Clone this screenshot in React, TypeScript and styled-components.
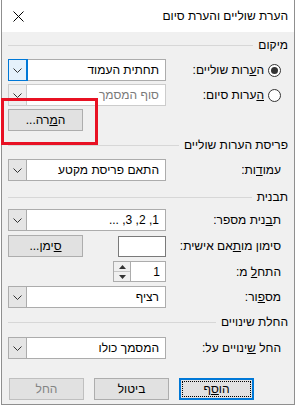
import React from 'react';
import styled, { createGlobalStyle } from 'styled-components';

const Global = createGlobalStyle`
  html, body { margin: 0; padding: 0; background: #ffffff; }
  body {
    font-family: "Liberation Sans", "DejaVu Sans", sans-serif;
    font-size: 12px;
    color: #000;
  }
  #root { width: 297px; height: 410px; overflow: hidden; }
`;

const Window = styled.div`
  position: relative;
  box-sizing: border-box;
  width: 294px;
  height: 405px;
  margin-left: 1px;
  border: 1px solid #8f8f8f;
  border-top: none;
  background: #f0f0f0;
  direction: rtl;
  display: flex;
  flex-direction: column;
`;

const TitleBar = styled.div`
  height: 32px;
  flex: none;
  background: #ffffff;
  display: flex;
  align-items: center;
  justify-content: space-between;
  padding: 0 6px 0 11px;
`;

const TitleText = styled.span`
  font-size: 12px;
  color: #000;
`;

const CloseIcon = styled.svg`
  width: 11px;
  height: 11px;
  display: block;
`;

const Content = styled.div`
  padding: 6px 6px 0 6px;
  display: flex;
  flex-direction: column;
`;

const Header = styled.div<{ $mt: number }>`
  display: flex;
  align-items: center;
  gap: 5px;
  height: 14px;
  margin-top: ${(p) => p.$mt}px;
  white-space: nowrap;
`;

const Rule = styled.div`
  flex: 1;
  height: 1px;
  background: #d7d7d7;
  margin-top: 1px;
`;

const Rows = styled.div<{ $mt: number; $gap: number }>`
  display: grid;
  grid-template-columns: 1fr 158px;
  row-gap: ${(p) => p.$gap}px;
  margin-top: ${(p) => p.$mt}px;
  align-items: center;
`;

const Label = styled.div<{ $pad?: number }>`
  display: flex;
  align-items: center;
  gap: 4px;
  padding-right: ${(p) => p.$pad ?? 7}px;
  white-space: nowrap;
`;

const Ctrl = styled.div<{ $justify?: string }>`
  display: flex;
  align-items: center;
  justify-content: ${(p) => p.$justify ?? 'space-between'};
`;

const RadioCircle = styled.span<{ $checked?: boolean }>`
  box-sizing: border-box;
  width: 13px;
  height: 13px;
  border-radius: 50%;
  border: 1px solid #333;
  background: #fff;
  display: flex;
  align-items: center;
  justify-content: center;
  &::after {
    content: '';
    width: 7px;
    height: 7px;
    border-radius: 50%;
    background: ${(p) => (p.$checked ? '#333' : 'transparent')};
  }
`;

const Select = styled.div<{ $disabled?: boolean }>`
  box-sizing: border-box;
  width: 158px;
  height: 22px;
  background: #fff;
  border: 1px solid ${(p) => (p.$disabled ? '#cccccc' : '#acacac')};
  color: ${(p) => (p.$disabled ? '#7a7a7a' : '#000')};
  display: flex;
  align-items: center;
  justify-content: space-between;
`;

const SelectText = styled.span`
  padding-right: 6px;
  white-space: nowrap;
`;

const ArrowBox = styled.span<{ $focus?: boolean; $disabled?: boolean }>`
  box-sizing: border-box;
  width: 18px;
  height: 20px;
  margin-left: 0;
  display: flex;
  align-items: center;
  justify-content: center;
  background: ${(p) => (p.$focus ? '#e5f1fb' : p.$disabled ? '#efefef' : '#e5e5e5')};
  border-right: 1px solid ${(p) => (p.$focus ? '#0078d7' : p.$disabled ? '#cccccc' : '#acacac')};
  ${(p) => (p.$focus ? 'outline: 1px solid #0078d7; outline-offset: 0;' : '')}
`;

const Chevron = styled.svg`
  width: 9px;
  height: 5px;
  display: block;
`;

const Button = styled.div<{ $disabled?: boolean; $default?: boolean }>`
  box-sizing: border-box;
  width: 75px;
  height: 22px;
  display: flex;
  align-items: center;
  justify-content: center;
  background: #e1e1e1;
  border: ${(p) => (p.$default ? '2px solid #0078d7' : `1px solid ${p.$disabled ? '#bfbfbf' : '#adadad'}`)};
  color: ${(p) => (p.$disabled ? '#838383' : '#000')};
  white-space: nowrap;
  position: relative;
`;

const FocusRing = styled.span`
  position: absolute;
  inset: 1px;
  border: 1px dotted #000;
  pointer-events: none;
`;

const TextBox = styled.div`
  box-sizing: border-box;
  width: 48px;
  height: 21px;
  background: #fff;
  border: 1px solid #7a7a7a;
`;

const Spinner = styled.div`
  box-sizing: border-box;
  width: 53px;
  height: 21px;
  background: #fff;
  border: 1px solid #acacac;
  display: flex;
  align-items: center;
  justify-content: space-between;
`;

const SpinValue = styled.span`
  padding-right: 5px;
`;

const SpinButtons = styled.span`
  box-sizing: border-box;
  width: 17px;
  height: 19px;
  border-right: 1px solid #acacac;
  display: flex;
  flex-direction: column;
  background: #f0f0f0;
`;

const SpinHalf = styled.span<{ $top?: boolean }>`
  flex: 1;
  display: flex;
  align-items: center;
  justify-content: center;
  ${(p) => (p.$top ? 'border-bottom: 1px solid #c6c6c6;' : '')}
`;

const Tri = styled.svg`
  width: 7px;
  height: 4px;
  display: block;
`;

const Footer = styled.div`
  display: flex;
  justify-content: flex-end;
  gap: 10px;
  margin-top: 19px;
  padding-left: 1px;
`;

const Highlight = styled.div`
  position: absolute;
  left: -1px;
  top: 98px;
  width: 97px;
  height: 47px;
  box-sizing: border-box;
  border: 3px solid #e81123;
  pointer-events: none;
`;

const ChevronIcon = () => (
  <Chevron viewBox="0 0 9 5">
    <polyline points="0.5,0.5 4.5,4.5 8.5,0.5" fill="none" stroke="#333" strokeWidth="1" />
  </Chevron>
);

const Dropdown: React.FC<{ text: string; focus?: boolean; disabled?: boolean }> = ({ text, focus, disabled }) => (
  <Select $disabled={disabled}>
    <SelectText>{text}</SelectText>
    <ArrowBox $focus={focus} $disabled={disabled}>
      <ChevronIcon />
    </ArrowBox>
  </Select>
);

export default function App() {
  return (
    <>
      <Global />
      <Window>
        <TitleBar>
          <TitleText>הערת שוליים והערת סיום</TitleText>
          <CloseIcon viewBox="0 0 11 11">
            <path d="M0.5 0.5 L10.5 10.5 M10.5 0.5 L0.5 10.5" stroke="#000" strokeWidth="1" fill="none" />
          </CloseIcon>
        </TitleBar>
        <Content>
          <Header $mt={0}>
            <span>מיקום</span>
            <Rule />
          </Header>
          <Rows $mt={7} $gap={3}>
            <Label $pad={7}>
              <RadioCircle $checked />
              <span>
                ה<u>ע</u>רות שוליים:
              </span>
            </Label>
            <Ctrl>
              <Dropdown text="תחתית העמוד" focus />
            </Ctrl>
            <Label $pad={7}>
              <RadioCircle />
              <span>
                <u>ה</u>ערות סיום:
              </span>
            </Label>
            <Ctrl>
              <Dropdown text="סוף המסמך" disabled />
            </Ctrl>
            <Label />
            <Ctrl $justify="flex-end">
              <Button>
                ה<u>מ</u>רה...
              </Button>
            </Ctrl>
          </Rows>

          <Header $mt={7}>
            <span>פריסת הערות שוליים</span>
            <Rule />
          </Header>
          <Rows $mt={7} $gap={3}>
            <Label>
              <span>
                עמו<u>ד</u>ות:
              </span>
            </Label>
            <Ctrl>
              <Dropdown text="התאם פריסת מקטע" />
            </Ctrl>
          </Rows>

          <Header $mt={9}>
            <span>תבנית</span>
            <Rule />
          </Header>
          <Rows $mt={5} $gap={4}>
            <Label>
              <span>
                ת<u>ב</u>נית מספר:
              </span>
            </Label>
            <Ctrl>
              <Dropdown text="1, 2, 3, ..." />
            </Ctrl>
            <Label>
              <span>
                סימון מו<u>ת</u>אם אישית:
              </span>
            </Label>
            <Ctrl>
              <TextBox />
              <Button>
                <u>ס</u>ימן...
              </Button>
            </Ctrl>
            <Label>
              <span>
                התח<u>ל</u> מ:
              </span>
            </Label>
            <Ctrl $justify="flex-start">
              <Spinner>
                <SpinValue>1</SpinValue>
                <SpinButtons>
                  <SpinHalf $top>
                    <Tri viewBox="0 0 7 4">
                      <polygon points="0,4 3.5,0 7,4" fill="#333" />
                    </Tri>
                  </SpinHalf>
                  <SpinHalf>
                    <Tri viewBox="0 0 7 4">
                      <polygon points="0,0 3.5,4 7,0" fill="#333" />
                    </Tri>
                  </SpinHalf>
                </SpinButtons>
              </Spinner>
            </Ctrl>
            <Label>
              <span>
                מס<u>פ</u>ור:
              </span>
            </Label>
            <Ctrl>
              <Dropdown text="רציף" />
            </Ctrl>
          </Rows>

          <Header $mt={7}>
            <span>החלת שינויים</span>
            <Rule />
          </Header>
          <Rows $mt={8} $gap={3}>
            <Label>
              <span>
                החל <u>ש</u>ינויים על:
              </span>
            </Label>
            <Ctrl>
              <Dropdown text="המסמך כולו" />
            </Ctrl>
          </Rows>

          <Footer>
            <Button $default>
              <FocusRing />
              הו<u>ס</u>ף
            </Button>
            <Button>ביטול</Button>
            <Button $disabled>החל</Button>
          </Footer>
        </Content>
        <Highlight />
      </Window>
    </>
  );
}
